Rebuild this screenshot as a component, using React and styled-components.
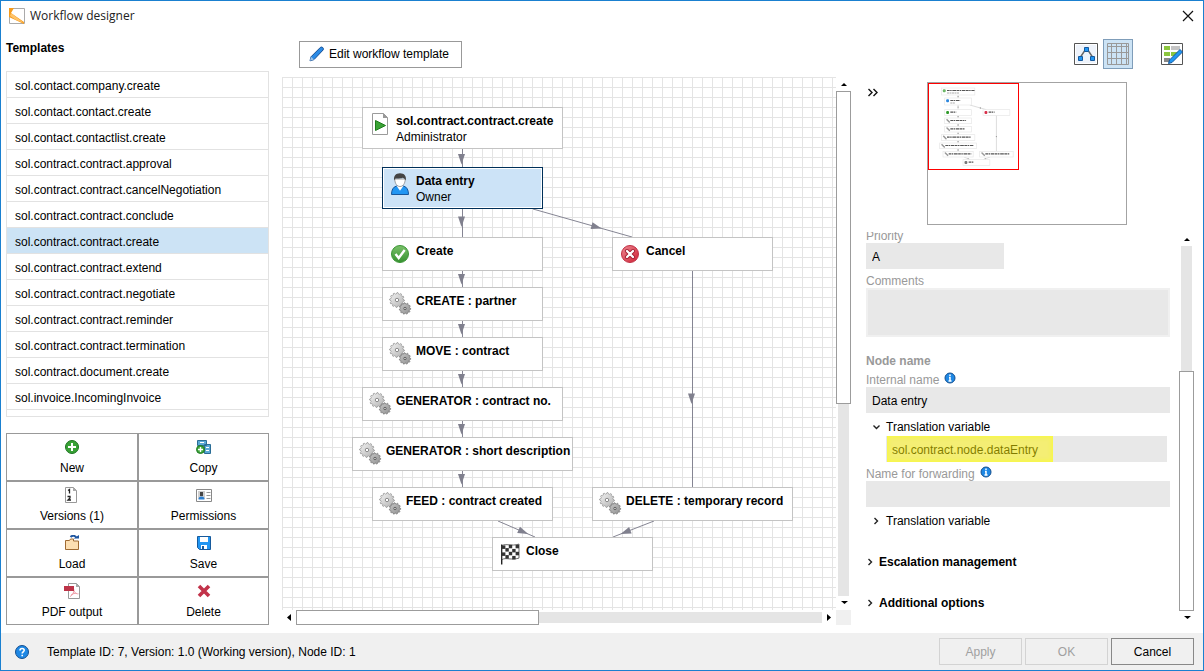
import React from "react";
import styled, { createGlobalStyle, css } from "styled-components";

const Global = createGlobalStyle`
  *, *::before, *::after { box-sizing: border-box; }
  body { margin: 0; background: #fff; }
  body, button, input, textarea {
    font-family: "Liberation Sans", Arial, sans-serif;
    font-size: 12px;
    color: #000;
  }
  button { padding: 0; cursor: pointer; }
  svg { display: block; flex: none; }
`;

/* ---------- data ---------- */

const templates = [
  "sol.contact.company.create",
  "sol.contact.contact.create",
  "sol.contact.contactlist.create",
  "sol.contract.contract.approval",
  "sol.contract.contract.cancelNegotiation",
  "sol.contract.contract.conclude",
  "sol.contract.contract.create",
  "sol.contract.contract.extend",
  "sol.contract.contract.negotiate",
  "sol.contract.contract.reminder",
  "sol.contract.contract.termination",
  "sol.contract.document.create",
  "sol.invoice.IncomingInvoice",
];

const nodes = [
  { x: 80, y: 30, w: 201, h: 42, icon: "start", title: "sol.contract.contract.create", sub: "Administrator" },
  { x: 100, y: 90, w: 161, h: 42, icon: "person", title: "Data entry", sub: "Owner", selected: true },
  { x: 100, y: 160, w: 161, h: 34, icon: "check", title: "Create" },
  { x: 330, y: 160, w: 161, h: 34, icon: "cross", title: "Cancel" },
  { x: 100, y: 210, w: 161, h: 34, icon: "gears", title: "CREATE : partner" },
  { x: 100, y: 260, w: 161, h: 34, icon: "gears", title: "MOVE : contract" },
  { x: 80, y: 310, w: 201, h: 34, icon: "gears", title: "GENERATOR : contract no." },
  { x: 70, y: 360, w: 221, h: 34, icon: "gears", title: "GENERATOR : short description" },
  { x: 90, y: 410, w: 181, h: 34, icon: "gears", title: "FEED : contract created" },
  { x: 310, y: 410, w: 201, h: 34, icon: "gears", title: "DELETE : temporary record" },
  { x: 210, y: 460, w: 161, h: 34, icon: "flag", title: "Close" },
];

/* x1, y1, x2, y2 and how far along the line its arrow head lies */
const edges = [
  [180.5, 72, 180.5, 90, 0.55],
  [180.5, 132, 180.5, 160, 0.45],
  [180.5, 194, 180.5, 210, 0.5],
  [180.5, 244, 180.5, 260, 0.5],
  [180.5, 294, 180.5, 310, 0.5],
  [180.5, 344, 180.5, 360, 0.5],
  [180.5, 394, 180.5, 410, 0.5],
  [251, 132, 350, 160, 0.64],
  [410.5, 194, 410.5, 410, 0.59],
  [216, 444, 253, 460, 0.68],
  [372, 444, 331, 460, 0.69],
];

/* ---------- icons ---------- */

const GEAR = (cx, cy, r, teeth) => {
  const pts = [];
  for (let i = 0; i < teeth * 4; i++) {
    const a = (Math.PI * 2 * i) / (teeth * 4);
    const rad = i % 4 < 2 ? r : r * 0.82;
    pts.push(`${(cx + rad * Math.cos(a)).toFixed(2)},${(cy + rad * Math.sin(a)).toFixed(2)}`);
  }
  return pts.join(" ");
};

const flagSquares = [];
for (let r = 0; r < 4; r++)
  for (let c = 0; c < 5; c++)
    if ((r + c) % 2 === 0) flagSquares.push([c, r]);

const flagLift = [1, 0.2, 0.4, 1, 0.4];

const nodeIcons = {
  start: (
    <>
      <path d="M4.500 .5h11l4 4v17h-15z" fill="#fff" stroke="#9b9b9b" />
      <path d="M15 0l5 5h-5z" fill="#999" />
      <path d="M7.500 7.500v10l10-5z" fill="#3aa335" stroke="#1c7a1a" />
    </>
  ),
  person: (
    <>
      <path d="M3.500 21.500c0-4.500 1.500-7.500 5-8.500h7c3.500 1 5 4 5 8.500z" fill="#2196f3" stroke="#17569b" />
      <path d="M8.500 12.800l3.500 5 3.500-5z" fill="#fff" />
      <path d="M6.800 6c0 4.500 2.200 7.500 5.200 7.500s5.200-3 5.200-7.500z" fill="#fff" stroke="#8a8a8a" strokeWidth=".8" />
      <path d="M6.200 7.500C5.300 3 7.800 .2 12 .2s6.700 2.800 5.800 7.300c-1-1.800-2.300-2.500-3.300-2.700-2.300 1-5.500.7-7 .7-.7.5-1 1.200-1.300 2z" fill="#444" />
    </>
  ),
  check: (
    <>
      <circle cx="12" cy="11" r="8.500" fill="url(#greenBall)" stroke="#3d9638" />
      <path d="M7.500 11l3.200 4 6-8" fill="none" stroke="#fff" strokeWidth="2.400" />
    </>
  ),
  cross: (
    <>
      <circle cx="12" cy="11" r="8.500" fill="url(#redBall)" stroke="#c03045" />
      <path d="M9 8l6 6M15 8l-6 6" stroke="#a32033" strokeWidth="4" strokeLinecap="round" />
      <path d="M9 8l6 6M15 8l-6 6" stroke="#fff" strokeWidth="2.200" strokeLinecap="round" />
    </>
  ),
  gears: (
    <>
      <polygon points={GEAR(9, 7, 7.4, 12)} fill="url(#steel)" stroke="#999" strokeWidth=".8" />
      <circle cx="9" cy="7" r="1.700" fill="#fff" stroke="#8c8c8c" />
      <polygon points={GEAR(17, 15.5, 5.7, 11)} fill="url(#steelDark)" stroke="#777" strokeWidth=".8" />
      <circle cx="17" cy="15.500" r="1.200" fill="#ddd" stroke="#5d5d5d" />
    </>
  ),
  flag: (
    <>
      <path d="M3.700 1.500v20" stroke="#222" strokeWidth="1.400" />
      <path d="M4 2.600c4-2.500 9 1 17-1.500v14c-8 2.500-13-1-17 1.500z" fill="#fff" stroke="#444" strokeWidth=".8" />
      {flagSquares.map(([c, r]) => (
        <rect key={`${c}-${r}`} x={4 + c * 3.4} y={1.4 + r * 3.5 + flagLift[c]} width="3.400" height="3.500" fill="#333" />
      ))}
    </>
  ),
};

const GradientDefs = () => (
  <svg width="0" height="0" aria-hidden="true">
    <defs>
      <linearGradient id="greenBall" x1="0" y1="0" x2="0" y2="1">
        <stop offset="0" stopColor="#7cc26b" />
        <stop offset="1" stopColor="#35912f" />
      </linearGradient>
      <linearGradient id="redBall" x1="0" y1="0" x2="1" y2="1">
        <stop offset="0" stopColor="#ee8a93" />
        <stop offset="1" stopColor="#cf1f33" />
      </linearGradient>
      <linearGradient id="steel" x1="0" y1="0" x2="1" y2="1">
        <stop offset="0" stopColor="#f4f4f4" />
        <stop offset="1" stopColor="#b0b0b0" />
      </linearGradient>
      <linearGradient id="steelDark" x1="0" y1="0" x2="1" y2="1">
        <stop offset="0" stopColor="#c8c8c8" />
        <stop offset="1" stopColor="#909090" />
      </linearGradient>
    </defs>
  </svg>
);

const actionIcons = {
  New: (
    <>
      <circle cx="8" cy="8" r="6.500" fill="#38a135" stroke="#1c7420" />
      <path d="M8 4v8M4 8h8" stroke="#fff" strokeWidth="2" />
    </>
  ),
  Copy: (
    <>
      <path d="M1.500 1.500h9v5h-9zM8.500 5.500h6v9h-6z" fill="#5aa9d6" stroke="#2a6d96" />
      <path d="M4 3.500h4M10 8.500h3M10 11.500h3" stroke="#fff" />
      <circle cx="4.500" cy="10.500" r="4" fill="#3da53a" stroke="#1f7a24" />
      <path d="M4.500 8v5M2 10.500h5" stroke="#fff" strokeWidth="1.400" />
    </>
  ),
  "Versions (1)": (
    <>
      <path d="M1.500 .5h8l3 3v12h-11z" fill="#fff" stroke="#999" />
      <path d="M9 0l4 4h-4z" fill="#aaa" />
      <path d="M4 3.500l1.500-1v4M3.500 9.500h2.500v1.500l-2 2h3" fill="none" stroke="#222" strokeWidth="1.300" />
    </>
  ),
  Permissions: (
    <>
      <path d="M.5 2.500h15v12h-15z" fill="#fff" stroke="#888" />
      <rect x="2" y="4" width="7" height="8" fill="#cfcfcf" />
      <path d="M4 5h3v4H4z" fill="#444" />
      <path d="M2.500 12.500c0-2 1-3 3-3s3 1 3 3z" fill="#2c7fd0" />
      <path d="M10.500 5.500h4M10.500 8.500h4M10.500 11.500h4" stroke="#999" />
    </>
  ),
  Load: (
    <>
      <path d="M1.500 14.500v-9h4l1-1.500h3v2h5v8.500z" fill="#fddfb2" stroke="#a06b33" />
      <path d="M6.500 2c2-2 5-1.500 6 1" fill="none" stroke="#1f56a0" strokeWidth="2" />
      <path d="M9.500 3.500h5.500V0z" fill="#1f56a0" />
    </>
  ),
  Save: (
    <>
      <path d="M1.500 1.500h13v13h-11l-2-2z" fill="#2196f3" stroke="#175a9c" />
      <rect x="4" y="2" width="8" height="5" fill="#fff" />
      <rect x="5" y="10" width="6" height="4" fill="#fff" />
      <rect x="6" y="11" width="2" height="3" fill="#175a9c" />
    </>
  ),
  "PDF output": (
    <>
      <path d="M4.500 .5h8l3 3v12h-11z" fill="#fff" stroke="#999" />
      <path d="M12 0l4 4h-4z" fill="#aaa" />
      <path d="M10 6.500c0 3-1.500 6-4 7M10 8c1 2.500 3 3 4.500 2.800M7 12c2-1.500 4-2 6-1.500" fill="none" stroke="#f0a0aa" />
      <rect x="0" y="3" width="10" height="5" fill="#bd3348" />
    </>
  ),
  Delete: <path d="M3 3l10 10M13 3L3 13" stroke="#c2334a" strokeWidth="3.600" />,
};

/* ---------- window ---------- */

const Window = styled.div`
  display: flex;
  flex-direction: column;
  height: 100vh;
  min-height: 600px;
  border: 1px solid #1a80d0;
  background: #fff;
`;

const TitleBar = styled.header`
  display: flex;
  align-items: center;
  gap: 5px;
  height: 30px;
  flex: none;
  padding: 0 9px 0 8px;
`;

const Title = styled.h1`
  flex: 1;
  margin: 0;
  font: 400 12px/16px "Open Sans", "Noto Sans", sans-serif;
  color: #222;
`;

const PlainButton = styled.button`
  display: flex;
  align-items: center;
  border: 0;
  background: none;
`;

const Body = styled.main`
  display: flex;
  flex: 1;
  min-height: 0;
  padding: 0 9px 8px 5px;
`;

/* ---------- left column ---------- */

const Sidebar = styled.aside`
  display: flex;
  flex-direction: column;
  width: 263px;
  flex: none;
`;

const Heading = styled.h2`
  margin: 0 0 6px;
  font-size: 12px;
  line-height: 34px;
`;

const TemplateList = styled.ul`
  flex: 1;
  min-height: 0;
  overflow: hidden;
  margin: 0 0 16px;
  padding: 0;
  list-style: none;
  border: 1px solid #e2e2e2;
`;

const TemplateItem = styled.button`
  display: block;
  width: 100%;
  height: 26px;
  padding: 2px 8px 0;
  text-align: left;
  border: 0;
  border-bottom: 1px solid #e2e2e2;
  background: ${(p) => (p.$selected ? "#cce3f5" : "#fff")};
`;

const ActionGrid = styled.div`
  display: grid;
  grid-template-columns: 132px 1fr;
  grid-auto-rows: 48px;
`;

const ActionButton = styled.button`
  display: flex;
  flex-direction: column;
  align-items: center;
  justify-content: center;
  gap: 5px;
  line-height: 16px;
  border: 1px solid #999;
  background: #fff;
`;

/* ---------- canvas ---------- */

const Designer = styled.section`
  display: flex;
  flex-direction: column;
  flex: 1;
  min-width: 0;
  margin: 0 15px 0 13px;
`;

const Toolbar = styled.div`
  display: flex;
  align-items: center;
  height: 46px;
  flex: none;
  padding: ${(p) => p.$pad};
  justify-content: ${(p) => (p.$end ? "flex-end" : "flex-start")};
`;

const EditButton = styled.button`
  display: flex;
  align-items: center;
  gap: 3px;
  height: 27px;
  padding: 0 12px 0 9px;
  border: 1px solid #999;
  background: #fff;
`;

const CanvasFrame = styled.div`
  display: grid;
  grid-template-columns: minmax(0, 1fr) 15px;
  grid-template-rows: minmax(0, 1fr) 15px;
  flex: 1;
  min-height: 0;
`;

const Canvas = styled.div`
  position: relative;
  overflow: hidden;
  background-image: linear-gradient(#e4e4e4 1px, transparent 1px),
    linear-gradient(90deg, #e4e4e4 1px, transparent 1px);
  background-size: 10px 10px;
`;

const EdgeLayer = styled.svg`
  position: absolute;
  inset: 0;
  width: 100%;
  height: 100%;
`;

const Node = styled.div`
  position: absolute;
  display: flex;
  gap: 4px;
  padding: 5px;
  white-space: nowrap;
  line-height: 16px;
  border: 1px solid #c4c4c4;
  background: #fff;
  svg { overflow: visible; }
  ${(p) =>
    p.$selected &&
    css`
      border-color: #00305a;
      background: #cce3f7;
      box-shadow: inset 0 0 0 1px #fff;
    `}
`;

const NodeTitle = styled.div`
  font-weight: 700;
`;

const Corner = styled.div`
  background: #f0f0f0;
`;

/* ---------- scrollbar ---------- */

const Bar = styled.div`
  display: flex;
  flex-direction: ${(p) => (p.$row ? "row" : "column")};
  min-width: 0;
  min-height: 0;
  ${(p) => (p.$row ? "height: 15px;" : "width: 15px;")}
`;

const ArrowButton = styled.button`
  display: flex;
  align-items: center;
  justify-content: center;
  flex: 0 0 14px;
  border: 0;
  background: none;
`;

const TrackPart = styled.div`
  flex: ${(p) => p.$size} 1 0;
  margin: ${(p) => (p.$row ? "2px 0" : "0 2px")};
  background: #e5e5e5;
`;

const Thumb = styled.div`
  flex: ${(p) => p.$size} 1 0;
  border: 1px solid #9c9c9c;
  background: #fff;
`;

const arrowShapes = {
  up: "M4 9l3-3 3 3z",
  down: "M4 5h7l-3.500 3z",
  left: "M9 3v7L5 6.500z",
  right: "M5 3v7l4-3.500z",
};

const Arrow = ({ dir }) => (
  <ArrowButton type="button" aria-label={`Scroll ${dir}`}>
    <svg width="14" height="14" viewBox="0 0 14 14">
      <path d={arrowShapes[dir]} fill="#000" />
    </svg>
  </ArrowButton>
);

function ScrollBar({ row, before, size, after }) {
  return (
    <Bar $row={row}>
      <Arrow dir={row ? "left" : "up"} />
      {before > 0 && <TrackPart $row={row} $size={before} />}
      <Thumb $size={size} />
      {after > 0 && <TrackPart $row={row} $size={after} />}
      <Arrow dir={row ? "right" : "down"} />
    </Bar>
  );
}

/* ---------- right column ---------- */

const Inspector = styled.section`
  display: flex;
  flex-direction: column;
  width: 328px;
  flex: none;
`;

const GridToggle = styled.button`
  display: flex;
  align-items: center;
  justify-content: center;
  width: 30px;
  height: 30px;
  margin: 0 28px 0 5px;
  border: 1px solid #7f9db9;
  background: #cce3f5;
`;

const Overview = styled.div`
  display: flex;
  align-items: flex-start;
  padding: 5px 0 7px;
  gap: 45px;
`;

const MiniMap = styled.div`
  width: 200px;
  height: 143px;
  border: 1px solid #a3a3a3;
`;

const FormFrame = styled.div`
  display: flex;
  justify-content: space-between;
  flex: 1;
  min-height: 0;
`;

const Form = styled.form`
  display: flex;
  flex-direction: column;
  justify-content: flex-end;
  width: 304px;
  padding-bottom: 2px;
  overflow: hidden;
`;

const Label = styled.label`
  display: flex;
  gap: 5px;
  flex: none;
  height: 15px;
  margin-top: 4px;
  line-height: 16px;
  color: #999;
`;

const GroupTitle = styled.h3`
  flex: none;
  height: 15px;
  margin: 16px 0 0;
  font-size: 12px;
  line-height: 16px;
  color: #999;
`;

const Field = styled.input`
  flex: none;
  width: ${(p) => (p.$short ? "138px" : "100%")};
  height: 26px;
  padding: 2px 6px 0;
  border: 0;
  background: #e8e8e8;
`;

const Comments = styled.textarea`
  flex: none;
  width: 100%;
  height: 49px;
  border: 2px solid #f0f0f0;
  background: #e8e8e8;
  resize: none;
`;

const Disclosure = styled.button`
  display: flex;
  align-items: center;
  gap: 3px;
  flex: none;
  height: 18px;
  margin-top: 5px;
  padding-left: 3px;
  border: 0;
  background: none;
`;

const Section = styled(Disclosure)`
  gap: 2px;
  height: 41px;
  margin-top: ${(p) => (p.$first ? 11 : 0)}px;
  padding-left: 0;
  padding-right: 0;
  margin-left: -3px;
  font-weight: 700;
`;

const HighlightBox = styled.div`
  position: relative;
  flex: none;
  margin: 0 3px 0 20px;
  display: flex;
  &::after {
    content: "";
    position: absolute;
    inset: 0 auto 0 1px;
    width: 166px;
    background: rgba(255, 244, 0, 0.5);
    box-shadow: inset 0 0 4px 1px rgba(250, 255, 40, 0.8);
    pointer-events: none;
  }
`;

/* ---------- footer ---------- */

const Footer = styled.footer`
  display: flex;
  align-items: center;
  flex: none;
  height: 37px;
  padding: 0 9px 0 14px;
  background: #f0f0f0;
`;

const Status = styled.span`
  flex: 1;
  margin-left: 18px;
`;

const DialogButton = styled.button`
  width: 83px;
  height: 27px;
  margin-left: 3px;
  border: 1px solid #888;
  background: #f0f0f0;
  &:disabled {
    color: #a0a0a0;
    border-color: #d3d3d3;
  }
`;

const arrowAt = ([x1, y1, x2, y2, t]) => {
  const a = (Math.atan2(y2 - y1, x2 - x1) * 180) / Math.PI;
  const cx = x1 + (x2 - x1) * t - (x1 === x2 ? 1 : 0);
  return `translate(${cx} ${y1 + (y2 - y1) * t}) rotate(${a})`;
};

const Edges = () =>
  edges.map((e) => (
    <g key={e.join()}>
      <line x1={e[0]} y1={e[1]} x2={e[2]} y2={e[3]} stroke="#858593" />
      <path d="M-5-3.500L5.500 0-5 3.500z" transform={arrowAt(e)} fill="#80808e" />
    </g>
  ));

const miniColors = { start: "#6db868", person: "#2c86dd", check: "#2f9a2a", cross: "#d8304a", gears: "#999", flag: "#777" };

const MiniDiagram = () => (
  <svg width="198" height="141" viewBox="0 0 1188 846">
    {edges.map((e) => (
      <g key={e.join()}>
        <line x1={e[0]} y1={e[1]} x2={e[2]} y2={e[3]} stroke="#ccc" strokeWidth="4" />
        <circle cx={e[0] + (e[2] - e[0]) * e[4]} cy={e[1] + (e[3] - e[1]) * e[4]} r="4" fill="#999" />
      </g>
    ))}
    {nodes.map((n) => (
      <g key={n.title}>
        <rect x={n.x} y={n.y} width={n.w} height={n.h} fill="#fff" stroke="#e6e6e6" strokeWidth="4" />
        {n.icon === "gears" ? (
          <path d={`M${n.x + 14} ${n.y + 10}l14 14`} stroke="#999" strokeWidth="9" strokeLinecap="round" />
        ) : (
          <rect x={n.x + 9} y={n.y + 8} width="17" height="18" rx="6" fill={miniColors[n.icon]} />
        )}
        <line
          x1={n.x + 34}
          x2={n.x + 34 + n.title.length * 5.9}
          y1={n.y + 15}
          y2={n.y + 15}
          stroke="#555"
          strokeWidth="7"
          strokeDasharray="16 3 9 4 22 3"
        />
        {n.sub && (
          <line x1={n.x + 34} x2={n.x + 34 + n.sub.length * 5.6} y1={n.y + 30} y2={n.y + 30} stroke="#aaa" strokeWidth="6" strokeDasharray="12 3" />
        )}
      </g>
    ))}
    <rect x="3" y="3" width="540" height="516" fill="none" stroke="#f00" strokeWidth="6" />
  </svg>
);

const Info = () => (
  <svg width="12" height="12" viewBox="0 0 12 12" aria-hidden="true">
    <circle cx="6" cy="6" r="5" fill="#1e88e5" stroke="#154f8e" />
    <path d="M6 2.500v1.500M5 5.500h1V9M4.500 9h3" fill="none" stroke="#fff" strokeWidth="1.500" />
  </svg>
);

const Chevron = ({ open }) => (
  <svg width="14" height="14" viewBox="0 0 14 14" aria-hidden="true">
    <path d={open ? "M4.500 5.500l3 3 3-3" : "M5.500 4l3 3-3 3"} fill="none" stroke="#222" strokeWidth="1.400" />
  </svg>
);

export default function App() {
  return (
    <Window>
      <Global />
      <GradientDefs />
      <TitleBar>
        <svg width="16" height="16" viewBox="0 0 16 16" aria-hidden="true">
          <path d="M.5 .5h15v15H.5z" fill="#fff" stroke="#aaa" />
          <path d="M0 0h5L2 5l13 9v2L0 9z" fill="#f59b1c" />
          <path d="M2 5l13 10-8-3-6-4z" fill="#ffc46b" />
        </svg>
        <Title>Workflow designer</Title>
        <PlainButton type="button" aria-label="Close">
          <svg width="12" height="12" viewBox="0 0 12 12">
            <path d="M1 1l10 10M11 1L1 11" stroke="#111" strokeWidth="1.200" />
          </svg>
        </PlainButton>
      </TitleBar>

      <Body>
        <Sidebar>
          <Heading>Templates</Heading>
          <TemplateList>
            {templates.map((t) => (
              <li key={t}>
                <TemplateItem type="button" $selected={t === "sol.contract.contract.create"}>
                  {t}
                </TemplateItem>
              </li>
            ))}
          </TemplateList>
          <ActionGrid>
            {Object.entries(actionIcons).map(([name, icon]) => (
              <ActionButton key={name} type="button">
                <svg width="16" height="16" viewBox="0 0 16 16" aria-hidden="true">{icon}</svg>
                {name}
              </ActionButton>
            ))}
          </ActionGrid>
        </Sidebar>

        <Designer>
          <Toolbar $pad="0 0 0 17px">
            <EditButton type="button">
              <svg width="17" height="16" viewBox="0 0 17 16" aria-hidden="true">
                <path d="M1 14.800l1-4L11.500 1.300c1.500-1 3.700.8 2.700 2.600L5 13.600z" fill="#2b8be6" stroke="#174f94" />
                <path d="M1 14.800l1-4 3 2.800z" fill="#9cc4ea" />
              </svg>
              Edit workflow template
            </EditButton>
          </Toolbar>
          <CanvasFrame>
            <Canvas>
              <EdgeLayer aria-hidden="true">
                <Edges />
              </EdgeLayer>
              {nodes.map((n) => (
                <Node key={n.title} $selected={n.selected} style={{ left: n.x, top: n.y, width: n.w, height: n.h }}>
                  <svg width="24" height="24" viewBox="0 0 24 24" aria-hidden="true">{nodeIcons[n.icon]}</svg>
                  <div>
                    <NodeTitle>{n.title}</NodeTitle>
                    {n.sub}
                  </div>
                </Node>
              ))}
            </Canvas>
            <ScrollBar before={0} size={312} after={192} />
            <ScrollBar row before={0} size={242} after={284} />
            <Corner />
          </CanvasFrame>
        </Designer>

        <Inspector>
          <Toolbar $end $pad="0 11px 0 0">
            <PlainButton type="button" aria-label="Arrange nodes">
              <svg width="24" height="22" viewBox="0 0 24 22">
                <path d="M.5 .5h23v21H.5z" fill="#fff" stroke="#555" />
                <path d="M2 2h20v18H2z" fill="#eef3fb" />
                <path d="M10.500 8l-4 6M14.500 8l4 6" stroke="#666" strokeWidth="1.400" />
                <path d="M10.500 4.500h4v4h-4zM4.500 13.500h4v4h-4zM16.500 13.500h4v4h-4z" fill="#2196f3" stroke="#15589c" />
              </svg>
            </PlainButton>
            <GridToggle type="button" aria-label="Show grid" aria-pressed="true">
              <svg width="22" height="22" viewBox="0 0 22 22">
                <path
                  d="M.5 .5h21v21H.5zM4.500 .5v21M9.500 .5v21M14.500 .5v21M19.500 .5v21M.5 3.500h21M.5 9.500h21M.5 15.500h21"
                  fill="none"
                  stroke="#999"
                />
              </svg>
            </GridToggle>
            <PlainButton type="button" aria-label="Edit form">
              <svg width="22" height="22" viewBox="0 0 22 22" overflow="visible">
                <path d="M.5 .5h21v21H.5z" fill="#fff" stroke="#555" />
                <path d="M3 3h6v4H3zM3 9h6v4H3zM10 9h7v4h-7z" fill="#8cc63f" />
                <path d="M10 3h9v4h-9z" fill="#c4c4c4" />
                <path d="M3 15h6v4H3z" fill="#888" />
                <path d="M7.500 20.500l1-3.500L19 6.500l2.500 2.500L11 19.500z" fill="#2196f3" stroke="#15589c" />
              </svg>
            </PlainButton>
          </Toolbar>
          <Overview>
            <PlainButton type="button" aria-label="Collapse panel">
              <svg width="16" height="20" viewBox="0 0 16 20">
                <path d="M2.500 7L6 10.500 2.500 14M7.500 7L11 10.500 7.500 14" fill="none" stroke="#111" strokeWidth="1.400" />
              </svg>
            </PlainButton>
            <MiniMap>
              <MiniDiagram />
            </MiniMap>
          </Overview>
          <FormFrame>
            <Form onSubmit={(e) => e.preventDefault()}>
              <Label htmlFor="priority">Priority</Label>
              <Field id="priority" $short readOnly value="A" />
              <Label htmlFor="comments">Comments</Label>
              <Comments id="comments" readOnly />
              <GroupTitle>Node name</GroupTitle>
              <Label htmlFor="internal">
                Internal name <Info />
              </Label>
              <Field id="internal" readOnly value="Data entry" />
              <Disclosure type="button" aria-expanded="true">
                <Chevron open />
                Translation variable
              </Disclosure>
              <HighlightBox>
                <Field aria-label="Translation variable" readOnly value="sol.contract.node.dataEntry" />
              </HighlightBox>
              <Label htmlFor="forwarding">
                Name for forwarding <Info />
              </Label>
              <Field id="forwarding" readOnly value="" />
              <Disclosure type="button" aria-expanded="false">
                <Chevron />
                Translation variable
              </Disclosure>
              <Section type="button" $first aria-expanded="false">
                <Chevron />
                Escalation management
              </Section>
              <Section type="button" aria-expanded="false">
                <Chevron />
                Additional options
              </Section>
            </Form>
            <ScrollBar before={126} size={239} after={0} />
          </FormFrame>
        </Inspector>
      </Body>

      <Footer>
        <PlainButton type="button" aria-label="Help">
          <svg width="14" height="14" viewBox="0 0 14 14">
            <circle cx="7" cy="7" r="6.500" fill="#1e88e5" stroke="#154f8e" />
            <path d="M5 5.500c0-2.800 4.200-2.600 4.200-.2 0 1.500-2 1.600-2 3.200M7.200 9.800v1.500" fill="none" stroke="#fff" strokeWidth="1.600" />
          </svg>
        </PlainButton>
        <Status>Template ID: 7, Version: 1.0 (Working version), Node ID: 1</Status>
        <DialogButton type="button" disabled>Apply</DialogButton>
        <DialogButton type="button" disabled>OK</DialogButton>
        <DialogButton type="button">Cancel</DialogButton>
      </Footer>
    </Window>
  );
}
